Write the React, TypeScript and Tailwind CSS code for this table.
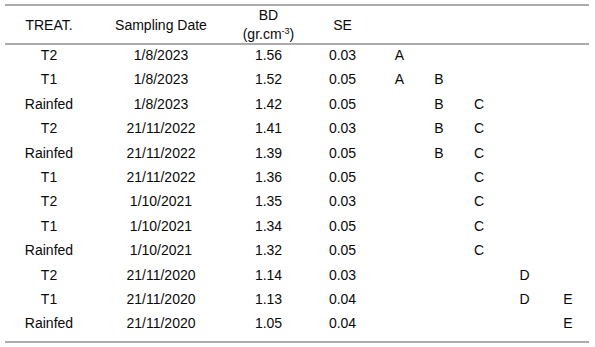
const ROWS: [string, string, string, string, string][] = [
  ['T2', '1/8/2023', '1.56', '0.03', 'A'],
  ['T1', '1/8/2023', '1.52', '0.05', 'AB'],
  ['Rainfed', '1/8/2023', '1.42', '0.05', 'BC'],
  ['T2', '21/11/2022', '1.41', '0.03', 'BC'],
  ['Rainfed', '21/11/2022', '1.39', '0.05', 'BC'],
  ['T1', '21/11/2022', '1.36', '0.05', 'C'],
  ['T2', '1/10/2021', '1.35', '0.03', 'C'],
  ['T1', '1/10/2021', '1.34', '0.05', 'C'],
  ['Rainfed', '1/10/2021', '1.32', '0.05', 'C'],
  ['T2', '21/11/2020', '1.14', '0.03', 'D'],
  ['T1', '21/11/2020', '1.13', '0.04', 'DE'],
  ['Rainfed', '21/11/2020', '1.05', '0.04', 'E'],
]

const GROUPS = ['A', 'B', 'C', 'D', 'E']

const cols = 'grid grid-cols-[88px_136px_79px_69px_45px_34px_46px_45px_42px]'

export default function App() {
  return (
    <div
      className="w-[595px] h-[347px] bg-white text-[14px] text-[#0a0a0a] pt-[4px]"
      style={{ fontFamily: '"Liberation Sans", Arial, sans-serif' }}
    >
      <div className="ml-[5px] w-[584px] border-t-2 border-b-2 border-[#ababab] pb-[3px]">
        {/* header */}
        <div className={`${cols} h-[39px] items-center text-center border-b-2 border-[#ababab]`}>
          <div className="pt-[1px]">TREAT.</div>
          <div className="pt-[1px]">Sampling Date</div>
          <div className="leading-[19px]">
            <div>BD</div>
            <div>
              (gr.cm<sup className="text-[9px] relative -top-[5px]">-3</sup>)
            </div>
          </div>
          <div className="pt-[1px]">SE</div>
          <div />
          <div />
          <div />
          <div />
          <div />
        </div>

        {/* body */}
        {ROWS.map((r, i) => (
          <div key={i} className={`${cols} h-[24.4px] items-center text-center pb-[4px]`}>
            <div>{r[0]}</div>
            <div>{r[1]}</div>
            <div>{r[2]}</div>
            <div>{r[3]}</div>
            {GROUPS.map(g => (
              <div key={g}>{r[4].includes(g) ? g : ''}</div>
            ))}
          </div>
        ))}
      </div>
    </div>
  )
}
